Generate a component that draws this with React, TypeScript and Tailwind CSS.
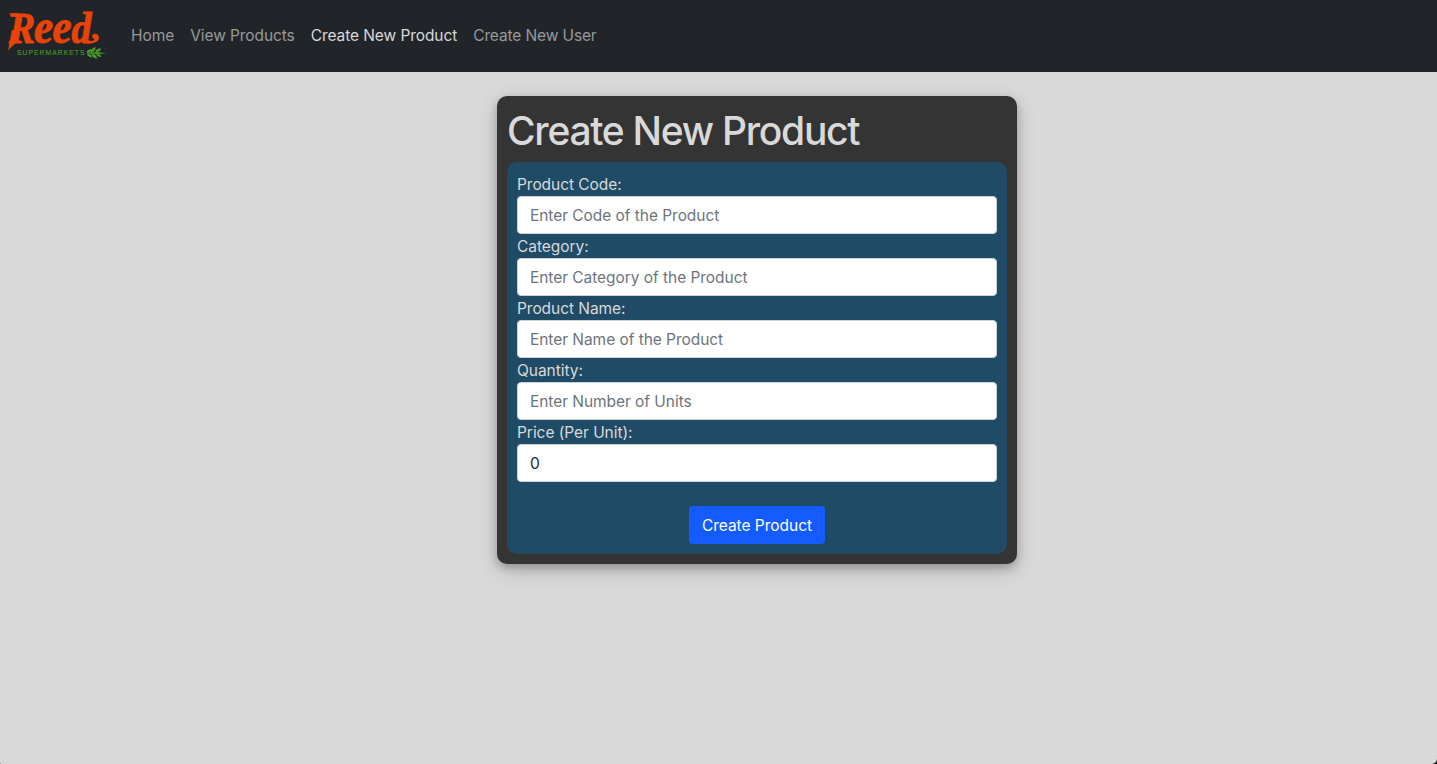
import React from "react";

type NavItem = { label: string; active?: boolean; tracking: string };
type Field = { id: string; label: string; placeholder?: string; value?: string };

const navItems: NavItem[] = [
  { label: "Home", tracking: "tracking-[-0.05px]" },
  { label: "View Products", tracking: "tracking-[-0.09px]" },
  { label: "Create New Product", active: true, tracking: "tracking-[-0.08px]" },
  { label: "Create New User", tracking: "tracking-[-0.12px]" },
];

const fields: Field[] = [
  { id: "code", label: "Product Code:", placeholder: "Enter Code of the Product" },
  { id: "category", label: "Category:", placeholder: "Enter Category of the Product" },
  { id: "name", label: "Product Name:", placeholder: "Enter Name of the Product" },
  { id: "quantity", label: "Quantity:", placeholder: "Enter Number of Units" },
  { id: "price", label: "Price (Per Unit):", value: "0" },
];

function Logo() {
  return (
    <svg width="112" height="72" viewBox="0 0 112 72" className="shrink-0" role="img" aria-label="Reed Supermarkets">
      <g fill="#e84308" stroke="#e84308">
        <text
          transform="translate(0 42.8) scale(1 1.13)"
          fontFamily="'Liberation Serif', serif"
          fontStyle="italic"
          fontWeight="700"
          fontSize="39"
          strokeWidth="0.9"
        >
          <tspan x="9">R</tspan>
          <tspan x="34" fontSize="43">e</tspan>
          <tspan x="52.5" fontSize="43">e</tspan>
          <tspan x="71.5" fontSize="40">d</tspan>
        </text>
        <path stroke="none" d="M9.500 13.2 L18 13 L18 16.500 L11 17 Z" />
        <path stroke="none" d="M12 30 L16.500 30 L16 43.300 Q13 45 8 50.5 Z" />
        <path stroke="none" d="M87 39.5 Q92 42.500 94.5 39.5 Q91 37 92.5 34.8 Q95 32.5 98 35 Q100.5 39 96.5 41.8 Q92 44.5 86 43 Z" />
      </g>
      <text
        x="17"
        y="54.7"
        fill="#4b9a2b"
        stroke="#4b9a2b"
        strokeWidth="0.1"
        fontFamily="'Liberation Sans', sans-serif"
        fontSize="6.7"
        textLength="67.5"
        lengthAdjust="spacing"
      >
        SUPERMARKETS
      </text>
      <g fill="#4b9a2b">
        <path d="M87 52.3 L99 52.3 L106 53.3 L99 54 L87 53.5 Z" />
        <path d="M86.500 52.500 Q86.500 49.500 91.500 49 Q91.500 52.500 86.500 52.500 Z" />
        <path d="M90.500 52.600 Q91 48 95.500 47 Q96 51.500 90.500 52.600 Z" />
        <path d="M95 52.700 Q96 48.500 101 48.300 Q100.500 52 95 52.700 Z" />
        <path d="M87 53.400 Q87 56.500 92 57.500 Q92 54 87 53.400 Z" />
        <path d="M91.500 53.500 Q91.500 57.500 97 58.800 Q97 54.500 91.500 53.500 Z" />
        <path d="M96 53.700 Q97 57 101.500 57 Q101 54.200 96 53.700 Z" />
      </g>
    </svg>
  );
}

export default function App() {
  return (
    <div className="h-screen bg-black font-['Inter','Liberation_Sans',sans-serif] text-[15.5px] leading-6">
      <div className="flex h-full flex-col overflow-hidden rounded-br-[5px] rounded-bl-[1px] bg-[#d9d9d9]">
        <nav className="flex h-[72px] shrink-0 items-center bg-[#212529]">
          <Logo />
          <ul className="ml-[11px] flex">
            {navItems.map((item) => (
              <li key={item.label} className="px-2">
                <a
                  href="#"
                  className={`whitespace-nowrap ${item.tracking} ${item.active ? "text-[#d7d8d8]" : "text-[#97999b]"}`}
                >
                  {item.label}
                </a>
              </li>
            ))}
          </ul>
        </nav>

        <main className="flex pt-6 pl-[497px]">
          <section className="w-[520px] rounded-[10px] bg-[#343434] p-[10px] shadow-[0_4px_8px_0_rgba(0,0,0,0.2),0_6px_20px_0_rgba(0,0,0,0.19)]">
            <h1 className="mb-2 w-fit pt-px text-[39px] leading-[47px] font-medium tracking-[-1.28px] text-[#d9d9d9]">
              Create New Product
            </h1>
            <form className="flex flex-col rounded-[10px] bg-[#1f4b66] p-[10px]" onSubmit={(e) => e.preventDefault()}>
              {fields.map((field) => (
                <React.Fragment key={field.id}>
                  <label htmlFor={field.id} className="h-6 w-fit pt-px tracking-[-0.05px] text-[#d9d9d9]">
                    {field.label}
                  </label>
                  <input
                    id={field.id}
                    placeholder={field.placeholder}
                    defaultValue={field.value}
                    className="h-[38px] w-full rounded-[4px] border border-[#ced4da] bg-white px-3 tracking-[-0.05px] text-[#212529] outline-none placeholder:text-[#6c757d]"
                  />
                </React.Fragment>
              ))}
              <button
                type="submit"
                className="mt-6 h-[38px] w-[136px] self-center rounded-[4px] bg-[#145cff] pt-0.5 tracking-[-0.02px] whitespace-nowrap text-white"
              >
                Create Product
              </button>
            </form>
          </section>
        </main>
      </div>
    </div>
  );
}
